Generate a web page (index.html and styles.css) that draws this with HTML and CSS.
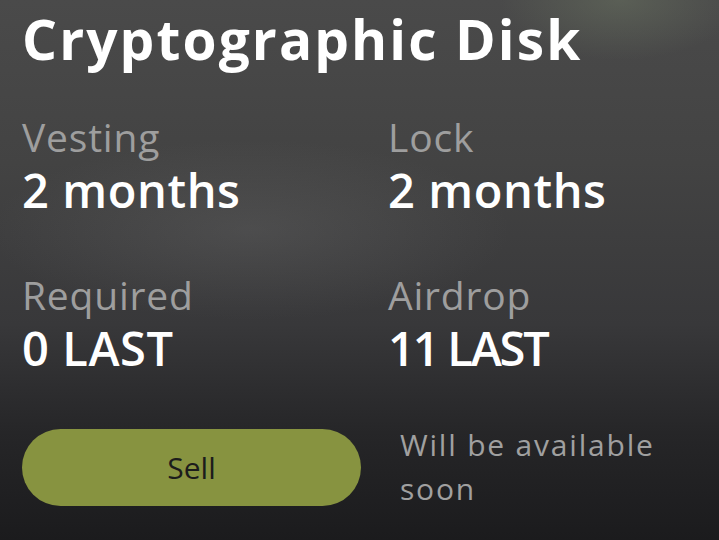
FILE: index.html
```html
<!DOCTYPE html>
<html lang="en">
<head>
<meta charset="utf-8">
<title>Cryptographic Disk</title>
<link rel="stylesheet" href="styles.css">
</head>
<body>
<main class="card">
  <h1 class="title">Cryptographic Disk</h1>
  <section class="stats">
    <div class="stat">
      <div class="label">Vesting</div>
      <div class="value">2 months</div>
    </div>
    <div class="stat">
      <div class="label">Lock</div>
      <div class="value">2 months</div>
    </div>
    <div class="stat">
      <div class="label">Required</div>
      <div class="value">0 LAST</div>
    </div>
    <div class="stat">
      <div class="label">Airdrop</div>
      <div class="value value-tight">11 LAST</div>
    </div>
  </section>
  <div class="actions">
    <button class="sell" type="button">Sell</button>
    <p class="note">Will be available soon</p>
  </div>
</main>
</body>
</html>
```
FILE: styles.css
```css
html, body {
  margin: 0;
  padding: 0;
  height: 100%;
}
body {
  width: 719px;
  height: 540px;
  overflow: hidden;
  font-family: "Open Sans", "Liberation Sans", sans-serif;
  background:
    radial-gradient(ellipse 120px 60px at 620px 0px, rgba(110,120,100,0.45), rgba(110,120,100,0) 100%),
    radial-gradient(ellipse 260px 90px at 250px 230px, rgba(120,120,120,0.25), rgba(120,120,120,0) 100%),
    linear-gradient(180deg, #4a4a4a 0%, #434343 30%, #38383a 60%, #262628 80%, #1b1b1d 100%);
}
.card {
  padding: 9px 22px 0 22px;
}
.title {
  margin: 0;
  font-size: 55px;
  line-height: 60px;
  font-weight: 700;
  letter-spacing: 2.1px;
  color: #ffffff;
}
.stats {
  margin-top: 44px;
  display: grid;
  grid-template-columns: 366px 1fr;
  row-gap: 53px;
}
.label {
  font-size: 39px;
  line-height: 48px;
  font-weight: 400;
  letter-spacing: 0.8px;
  color: #9e9e9e;
}
.value {
  margin-top: 1px;
  font-size: 47px;
  line-height: 56px;
  font-weight: 600;
  letter-spacing: 0.6px;
  color: #ffffff;
}
.value-tight {
  letter-spacing: -2.2px;
}
.actions {
  margin-top: 47px;
  display: flex;
  align-items: center;
  gap: 39px;
}
.sell {
  flex: 0 0 339px;
  width: 339px;
  height: 77px;
  border: none;
  border-radius: 39px;
  background: #879340;
  color: #1c1c1c;
  font-family: inherit;
  font-size: 30px;
  font-weight: 400;
  padding: 0;
}
.note {
  flex: 1 1 auto;
  margin: 0;
  font-size: 30px;
  line-height: 44px;
  letter-spacing: 1.8px;
  color: #a0a0a0;
}
```
